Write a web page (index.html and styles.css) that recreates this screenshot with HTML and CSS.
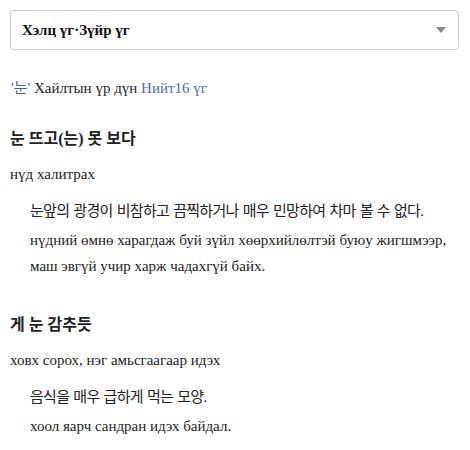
FILE: index.html
```html
<!DOCTYPE html>
<html lang="mn">
<head>
<meta charset="utf-8">
<link rel="stylesheet" href="styles.css">
</head>
<body>
<div class="page">
  <div class="select">
    <span class="select-label">Хэлц үг·Зүйр үг</span>
    <span class="caret"></span>
  </div>
  <p class="summary"><span class="kw">'눈'</span> Хайлтын үр дүн <span class="count">Нийт16 үг</span></p>
  <div class="entry">
    <h3 class="term">눈 뜨고(는) 못 보다</h3>
    <p class="gloss">нүд халитрах</p>
    <div class="def">
      <p class="def-ko">눈앞의 광경이 비참하고 끔찍하거나 매우 민망하여 차마 볼 수 없다.</p>
      <p class="def-mn">нүдний өмнө харагдаж буй зүйл хөөрхийлөлтэй буюу жигшмээр, маш эвгүй учир харж чадахгүй байх.</p>
    </div>
  </div>
  <div class="entry">
    <h3 class="term">게 눈 감추듯</h3>
    <p class="gloss">ховх сорох, нэг амьсгаагаар идэх</p>
    <div class="def">
      <p class="def-ko">음식을 매우 급하게 먹는 모양.</p>
      <p class="def-mn">хоол яарч сандран идэх байдал.</p>
    </div>
  </div>
</div>
</body>
</html>
```
FILE: styles.css
```css
html, body {
  margin: 0;
  padding: 0;
  background: #fff;
}
body {
  font-family: "Liberation Serif", "Noto Sans CJK KR", serif;
  color: #222;
  font-size: 15px;
}
.page {
  padding: 10px 11px 0 10px;
}
.select {
  height: 38px;
  border: 1px solid #ccc;
  border-radius: 4px;
  display: flex;
  align-items: center;
  justify-content: space-between;
  padding: 0 12px 0 11px;
}
.select-label {
  font-weight: bold;
  font-size: 15px;
  color: #111;
}
.caret {
  width: 0;
  height: 0;
  border-left: 5px solid transparent;
  border-right: 5px solid transparent;
  border-top: 6px solid #888;
}
.summary {
  margin: 29px 0 0 1px;
  font-size: 15px;
  line-height: 18px;
}
.kw {
  color: #3f5fae;
}
.count {
  color: #4d6cab;
}
.entry {
  margin-top: 31px;
}
.entry + .entry {
  margin-top: 35px;
}
.term {
  margin: 0;
  font-size: 16px;
  font-weight: bold;
  line-height: 22px;
}
.gloss {
  margin: 15px 0 0;
  font-size: 15px;
  line-height: 18px;
}
.def {
  margin: 15px 0 0 20px;
}
.def p {
  margin: 0;
  font-size: 15px;
  line-height: 26px;
}
.def-ko {
  letter-spacing: -0.7px;
  word-spacing: 1px;
  margin-bottom: 3px !important;
}
```
